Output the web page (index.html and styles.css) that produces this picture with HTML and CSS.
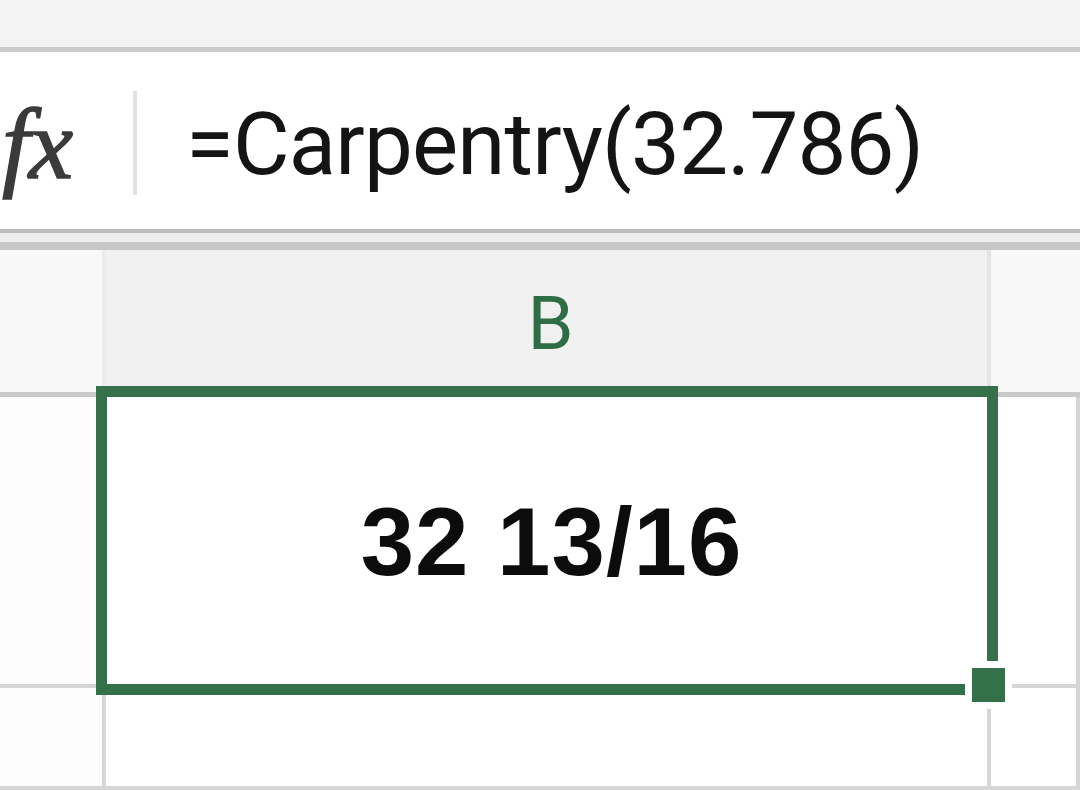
FILE: index.html
```html
<!DOCTYPE html>
<html lang="en">

<head>
    <meta charset="UTF-8">
    <meta name="viewport" content="width=device-width, initial-scale=1.0">
    <title>Carpentry</title>
    <link rel="stylesheet" href="styles.css">
</head>

<body>
    <div class="toolbar"></div>

    <div class="formula-bar">
        <div class="fx">fx</div>
        <div class="divider"></div>
        <div class="formula">=Carpentry(32.786)</div>
    </div>
    <div class="bar-edge"></div>

    <div class="sheet">
        <div class="head corner"></div>
        <div class="head col-b">B</div>
        <div class="head col-c"></div>

        <div class="cell row-head"></div>
        <div class="cell active">
            <span class="value">32 13/16</span>
            <div class="selection">
                <div class="handle"></div>
            </div>
        </div>
        <div class="cell"></div>

        <div class="cell row-head"></div>
        <div class="cell"></div>
        <div class="cell"></div>
    </div>
</body>

</html>
```

FILE: styles.css
```css
body {
    margin: 0;
    padding: 0;
    width: 1080px;
    height: 790px;
    overflow: hidden;
    background: #fff;
    font-family: Roboto, "Liberation Sans", sans-serif;
}

.toolbar {
    height: 47px;
    background: #f3f3f3;
    border-bottom: 5px solid #cbcbcb;
}

/* formula bar */
.formula-bar {
    display: flex;
    align-items: center;
    height: 177px;
    background: #fff;
}

.fx {
    width: 131px;
    padding-left: 2px;
    font-family: "Liberation Serif", serif;
    font-style: italic;
    font-size: 100px;
    letter-spacing: -1px;
    color: #3b3b3b;
    -webkit-text-stroke: 1.5px #3b3b3b;
    line-height: 1;
    padding-top: 8px;
}

.divider {
    width: 4px;
    height: 104px;
    background: #e2e2e2;
    margin-top: 4px;
}

.formula {
    margin-left: 49px;
    font-size: 87px;
    letter-spacing: -0.8px;
    color: #141414;
    line-height: 1;
    padding-top: 8px;
}

.bar-edge {
    height: 9px;
    border-top: 4px solid #bcbcbc;
    border-bottom: 8px solid #c7c7c7;
    background: #ededed;
}

/* grid */
.sheet {
    display: grid;
    grid-template-columns: 106px 885px 1fr;
    grid-template-rows: 147px 291px 1fr;
    height: 540px;
}

.head {
    background: #f8f8f8;
    border-bottom: 5px solid #c9c9c9;
    border-right: 4px solid #ececec;
}

.col-b {
    background: #f1f1f1;
    border-right-color: #e4e4e4;
    display: flex;
    align-items: center;
    justify-content: center;
    font-size: 74px;
    color: #2f6d44;
    padding-top: 4px;
    padding-left: 8px;
}

.col-c {
    border-right: none;
}

.cell {
    border-right: 4px solid #d6d6d6;
    border-bottom: 4px solid #d6d6d6;
}

.row-head {
    background: #fdfdfd;
}

.active {
    position: relative;
    display: flex;
    align-items: center;
    justify-content: center;
}

.value {
    font-family: "Liberation Sans", Arial, sans-serif;
    font-weight: bold;
    font-size: 96px;
    letter-spacing: 1px;
    color: #0c0c0c;
    padding-top: 2px;
    padding-left: 10px;
}

.selection {
    position: absolute;
    top: -11px;
    left: -10px;
    right: -11px;
    bottom: -11px;
    border: 11px solid #34704a;
}

.handle {
    position: absolute;
    right: -18px;
    bottom: -18px;
    width: 33px;
    height: 34px;
    background: #34704a;
    box-shadow: 0 0 0 7px #fff;
}
```
